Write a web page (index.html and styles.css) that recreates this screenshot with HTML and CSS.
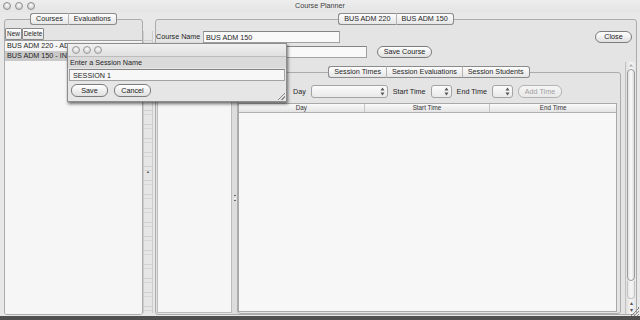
FILE: index.html
```html
<!DOCTYPE html>
<html>
<head>
<meta charset="utf-8">
<title>Course Planner</title>
<link rel="stylesheet" href="styles.css">
</head>
<body>
<div class="window">
  <div class="titlebar">
    <div class="lights"><span class="light"></span><span class="light"></span><span class="light"></span></div>
    <div class="title">Course Planner</div>
    <div></div>
  </div>

  <div class="main">
    <div class="left-pane">
      <div class="tabs"><span class="tab">Courses</span><span class="tab">Evaluations</span></div>
      <div class="frame left-frame">
        <div class="toolbar"><button class="sq-btn new-btn">New</button><button class="sq-btn del-btn">Delete</button></div>
        <ul class="list">
          <li>BUS ADM 220 - ADVANCED MARKETING</li>
          <li class="selected">BUS ADM 150 - INTRO TO BUSINESS</li>
        </ul>
      </div>
    </div>

    <div class="split-divider"><span class="grip-mark">&#9650;</span></div>

    <div class="right-pane">
      <div class="tabs"><span class="tab">BUS ADM 220</span><span class="tab">BUS ADM 150</span></div>
      <div class="frame right-frame">
        <div class="form-row">
          <label class="lbl">Course Name</label>
          <input class="field name-field" value="BUS ADM 150">
          <span class="spacer"></span>
          <button class="pill close-btn">Close</button>
        </div>
        <div class="form-row row2">
          <label class="lbl">Description</label>
          <input class="field desc-field" value="">
          <button class="pill save-course">Save Course</button>
        </div>
        <div class="scroll-area">
          <div class="viewport">
            <div class="session-list"></div>
            <div class="mini-divider"><span class="mini-grip"></span></div>
            <div class="session-pane">
              <div class="tabs"><span class="tab">Session Times</span><span class="tab">Session Evaluations</span><span class="tab">Session Students</span></div>
              <div class="frame inner-frame">
                <div class="controls">
                  <span class="clbl">Day</span>
                  <span class="spin day-spin"><span class="stepper"><svg width="5" height="9" viewBox="0 0 5 9"><path d="M2.5 0.5 L4.5 3.5 L0.5 3.5 Z M2.5 8.5 L4.5 5.5 L0.5 5.5 Z" fill="#555"/></svg></span></span>
                  <span class="clbl">Start Time</span>
                  <span class="spin small-spin"><span class="stepper"><svg width="5" height="9" viewBox="0 0 5 9"><path d="M2.5 0.5 L4.5 3.5 L0.5 3.5 Z M2.5 8.5 L4.5 5.5 L0.5 5.5 Z" fill="#555"/></svg></span></span>
                  <span class="clbl">End Time</span>
                  <span class="spin small-spin"><span class="stepper"><svg width="5" height="9" viewBox="0 0 5 9"><path d="M2.5 0.5 L4.5 3.5 L0.5 3.5 Z M2.5 8.5 L4.5 5.5 L0.5 5.5 Z" fill="#555"/></svg></span></span>
                  <button class="pill add-time" disabled>Add Time</button>
                </div>
                <div class="table">
                  <div class="thead">
                    <div class="th">Day</div>
                    <div class="th">Start Time</div>
                    <div class="th last">End Time</div>
                  </div>
                  <div class="tbody"></div>
                </div>
              </div>
            </div>
          </div>
          <div class="vscroll">
            <span class="cap-arrow">&#708;</span>
            <span class="thumb"></span>
            <span class="track-end"></span>
            <span class="arrows"><span>&#9652;</span><span>&#9662;</span></span>
          </div>
        </div>
      </div>
    </div>
  </div>

  <div class="statusbar"></div>
  <span class="corner-grip"></span>

  <div class="dialog">
    <div class="d-title"><span class="light"></span><span class="light"></span><span class="light"></span></div>
    <div class="d-label">Enter a Session Name</div>
    <input class="field d-field" value="SESSION 1">
    <div class="d-buttons">
      <button class="pill d-btn">Save</button>
      <button class="pill d-btn">Cancel</button>
    </div>
    <span class="d-grip"></span>
  </div>
</div>
</body>
</html>
```

FILE: styles.css
```css
* { box-sizing: border-box; }
html, body { margin: 0; padding: 0; }
body {
  width: 640px;
  height: 320px;
  overflow: hidden;
  background: #e8e8e8;
  font-family: "Liberation Sans", Arial, sans-serif;
  font-size: 7.2px;
  color: #1f1f1f;
}
.window {
  position: relative;
  width: 640px;
  height: 320px;
  display: flex;
  flex-direction: column;
}

/* title bar */
.titlebar {
  height: 12px;
  display: grid;
  grid-template-columns: 1fr auto 1fr;
  align-items: center;
  background: linear-gradient(#eeeeee, #e4e4e4);
}
.lights { display: flex; gap: 4px; padding-left: 3px; }
.light {
  width: 8px;
  height: 8px;
  border-radius: 50%;
  border: 1px solid #8e8e8e;
  background: radial-gradient(circle at 50% 35%, #fbfbfb, #d2d2d2 70%, #c4c4c4);
}
.title { color: #3e3e3e; line-height: 12px; }

/* main */
.main {
  flex: 1;
  min-height: 0;
  display: flex;
  padding-bottom: 1px;
}
.tabs {
  display: flex;
  justify-content: center;
  margin-top: 1px;
  margin-bottom: -6px;
  position: relative;
  z-index: 1;
}
.tab {
  height: 12px;
  padding: 0 5px;
  line-height: 10px;
  border: 1px solid #8a8a8a;
  border-right-color: #b4b4b4;
  background: linear-gradient(#fdfdfd, #e6e6e6);
  white-space: nowrap;
}
.tab:first-child { border-radius: 3px 0 0 3px; }
.tab:last-child { border-radius: 0 3px 3px 0; border-right-color: #8a8a8a; }
.tab + .tab { border-left: none; }

.frame {
  border: 1px solid #acacac;
  border-radius: 3px;
  background: #e4e4e4;
}

/* left pane */
.left-pane {
  width: 143px;
  padding-left: 4px;
  display: flex;
  flex-direction: column;
}
.left-frame {
  flex: 1;
  display: flex;
  flex-direction: column;
  padding-top: 8px;
  overflow: hidden;
}
.toolbar { display: flex; height: 12px; }
.sq-btn {
  margin: 0;
  padding: 0;
  height: 12px;
  font-family: inherit;
  font-size: 6.4px;
  color: #1f1f1f;
  line-height: 10px;
  border: 1px solid #8a8a8a;
  border-radius: 1px;
  background: linear-gradient(#ffffff, #e4e4e4);
}
.new-btn { width: 17px; }
.del-btn { width: 22px; }
.list {
  flex: 1;
  margin: 0;
  padding: 0;
  list-style: none;
  background: #f6f6f6;
  border-top: 1px solid #9e9e9e;
}
.list li {
  height: 10px;
  line-height: 10px;
  padding-left: 2px;
  white-space: nowrap;
  overflow: hidden;
}
.list li:first-child { margin-top: 0; }
.list li.selected { background: #c9c9c9; }

/* split divider */
.split-divider {
  width: 10px;
  margin: 19px 0 2px;
  display: flex;
  align-items: center;
  justify-content: center;
  border-left: 1px solid #cdcdcd;
  border-right: 1px solid #cdcdcd;
  background: repeating-linear-gradient(#e6e6e6 0 9px, #d0d0d0 9px 10px, #e6e6e6 10px 13px, #d6d6d6 13px 14px);
}
.grip-mark { font-size: 4px; color: #555; line-height: 4px; }

/* right pane */
.right-pane {
  flex: 1;
  min-width: 0;
  padding: 0 3px 0 2px;
  display: flex;
  flex-direction: column;
}
.right-frame {
  flex: 1;
  min-height: 0;
  display: flex;
  flex-direction: column;
  padding-top: 11px;
}
.form-row {
  display: flex;
  align-items: center;
  height: 12px;
}
.row2 { margin-top: 3px; }
.lbl { width: 47px; white-space: nowrap; line-height: 12px; }
.field {
  margin: 0;
  height: 12px;
  padding: 0 2px;
  border: 1px solid #a2a2a2;
  border-top-color: #858585;
  background: #f9f9f9;
  font: inherit;
  color: #1f1f1f;
  outline: none;
}
.name-field { width: 137px; }
.desc-field { width: 164px; }
.spacer { flex: 1; }
.pill {
  margin: 0;
  padding: 0;
  height: 12px;
  font: inherit;
  color: #202020;
  line-height: 10px;
  border: 1px solid #7c7c7c;
  border-radius: 6px;
  background: linear-gradient(#ffffff, #e0e0e0);
  white-space: nowrap;
}
.close-btn { width: 37px; margin-right: 4px; }
.save-course { width: 55px; margin-left: 10px; }

/* scroll area */
.scroll-area {
  flex: 1;
  min-height: 0;
  margin-top: 4px;
  display: flex;
}
.viewport {
  flex: 1;
  min-width: 0;
  display: flex;
}
.session-list {
  width: 75px;
  margin: 0 0 1px 1px;
  background: #f6f6f6;
  border: 1px solid #bcbcbc;
}
.mini-divider {
  width: 5px;
  display: flex;
  align-items: center;
  justify-content: center;
  padding-top: 20px;
  background: #dddddd;
}
.mini-grip {
  width: 2px;
  height: 6px;
  border-top: 1px solid #666;
  border-bottom: 1px solid #666;
  background: linear-gradient(#fff, #fff) center / 2px 1px no-repeat;
}
.session-pane {
  width: 384px;
  display: flex;
  flex-direction: column;
}
.session-pane .tabs { margin-top: 4px; }
.inner-frame {
  flex: 1;
  min-height: 0;
  display: flex;
  flex-direction: column;
  padding: 12px 3px 1px 0;
}
.controls {
  height: 13px;
  display: flex;
  align-items: center;
  justify-content: center;
  gap: 5px;
}
.clbl { white-space: nowrap; }
.spin {
  height: 13px;
  border: 1px solid #a4a4a4;
  border-radius: 3px;
  background: linear-gradient(#fbfbfb, #e9e9e9);
  display: flex;
  justify-content: flex-end;
  align-items: center;
}
.day-spin { width: 77px; }
.small-spin { width: 21px; }
.stepper {
  width: 8px;
  height: 11px;
  display: flex;
  align-items: center;
  justify-content: center;
}
.add-time {
  width: 44px;
  height: 13px;
  color: #a0a0a0;
  border-color: #b4b4b4;
  background: linear-gradient(#f6f6f6, #e8e8e8);
}

.table {
  flex: 1;
  min-height: 0;
  margin-top: 5px;
  display: flex;
  flex-direction: column;
  border: 1px solid #a9a9a9;
  background: #f7f7f7;
}
.thead {
  display: grid;
  grid-template-columns: 1fr 1fr 1fr;
  height: 9px;
  background: linear-gradient(#fafafa, #e4e4e4);
  border-bottom: 1px solid #b0b0b0;
}
.th {
  font-size: 6.3px;
  line-height: 8px;
  text-align: center;
  border-right: 1px solid #c6c6c6;
  color: #333;
}
.th.last { border-right: none; }
.tbody { flex: 1; }

/* vertical scrollbar */
.vscroll {
  width: 11px;
  display: flex;
  flex-direction: column;
  align-items: center;
  border-left: 1px solid #c2c2c2;
  background: linear-gradient(90deg, #dedede, #f5f5f5 50%, #e4e4e4);
}
.cap-arrow { height: 7px; font-size: 6px; line-height: 8px; color: #666; }
.thumb {
  flex: 1;
  width: 8px;
  border: 1px solid #9c9c9c;
  border-radius: 4px;
  background: linear-gradient(90deg, #e2e2e2, #fbfbfb 50%, #dcdcdc);
}
.track-end {
  height: 18px;
  width: 8px;
  border: 1px solid #c4c4c4;
  border-top: none;
  border-radius: 0 0 4px 4px;
  margin-bottom: 1px;
}
.arrows {
  height: 14px;
  display: flex;
  flex-direction: column;
  align-items: center;
  font-size: 6px;
  line-height: 7px;
  color: #555;
}

.statusbar { height: 4px; background: #505050; }
.corner-grip {
  position: absolute;
  right: 1px;
  bottom: 4px;
  width: 9px;
  height: 9px;
  background: linear-gradient(135deg, transparent 0 50%, #888 50% 57%, transparent 57% 68%, #888 68% 75%, transparent 75% 86%, #888 86% 93%, transparent 93%);
}

/* dialog */
.dialog {
  position: absolute;
  left: 67px;
  top: 43px;
  width: 220px;
  height: 59px;
  display: flex;
  flex-direction: column;
  background: #e6e6e6;
  border: 1px solid #8c8c8c;
  box-shadow: 1px 2px 3px rgba(0, 0, 0, 0.55);
  z-index: 5;
}
.d-title {
  height: 13px;
  display: flex;
  align-items: center;
  gap: 3px;
  padding-left: 4px;
  background: linear-gradient(#f0f0f0, #e0e0e0);
  border-bottom: 1px solid #bcbcbc;
}
.d-title .light {
  border-color: #9a9a9a;
  background: radial-gradient(circle at 50% 35%, #fafafa, #d6d6d6 70%);
}
.d-label {
  height: 11px;
  line-height: 11px;
  padding-left: 2px;
  background: #dadada;
}
.d-field {
  margin: 1px 1px 0;
  height: 12px;
  padding-left: 3px;
  background: #f7f7f7;
}
.d-buttons {
  display: flex;
  gap: 6px;
  padding: 3px 0 0 3px;
}
.d-btn { width: 37px; height: 13px; }
.d-grip {
  position: absolute;
  right: 1px;
  bottom: 1px;
  width: 7px;
  height: 7px;
  background: linear-gradient(135deg, transparent 0 45%, #8a8a8a 45% 55%, transparent 55% 70%, #8a8a8a 70% 80%, transparent 80%);
}
```
